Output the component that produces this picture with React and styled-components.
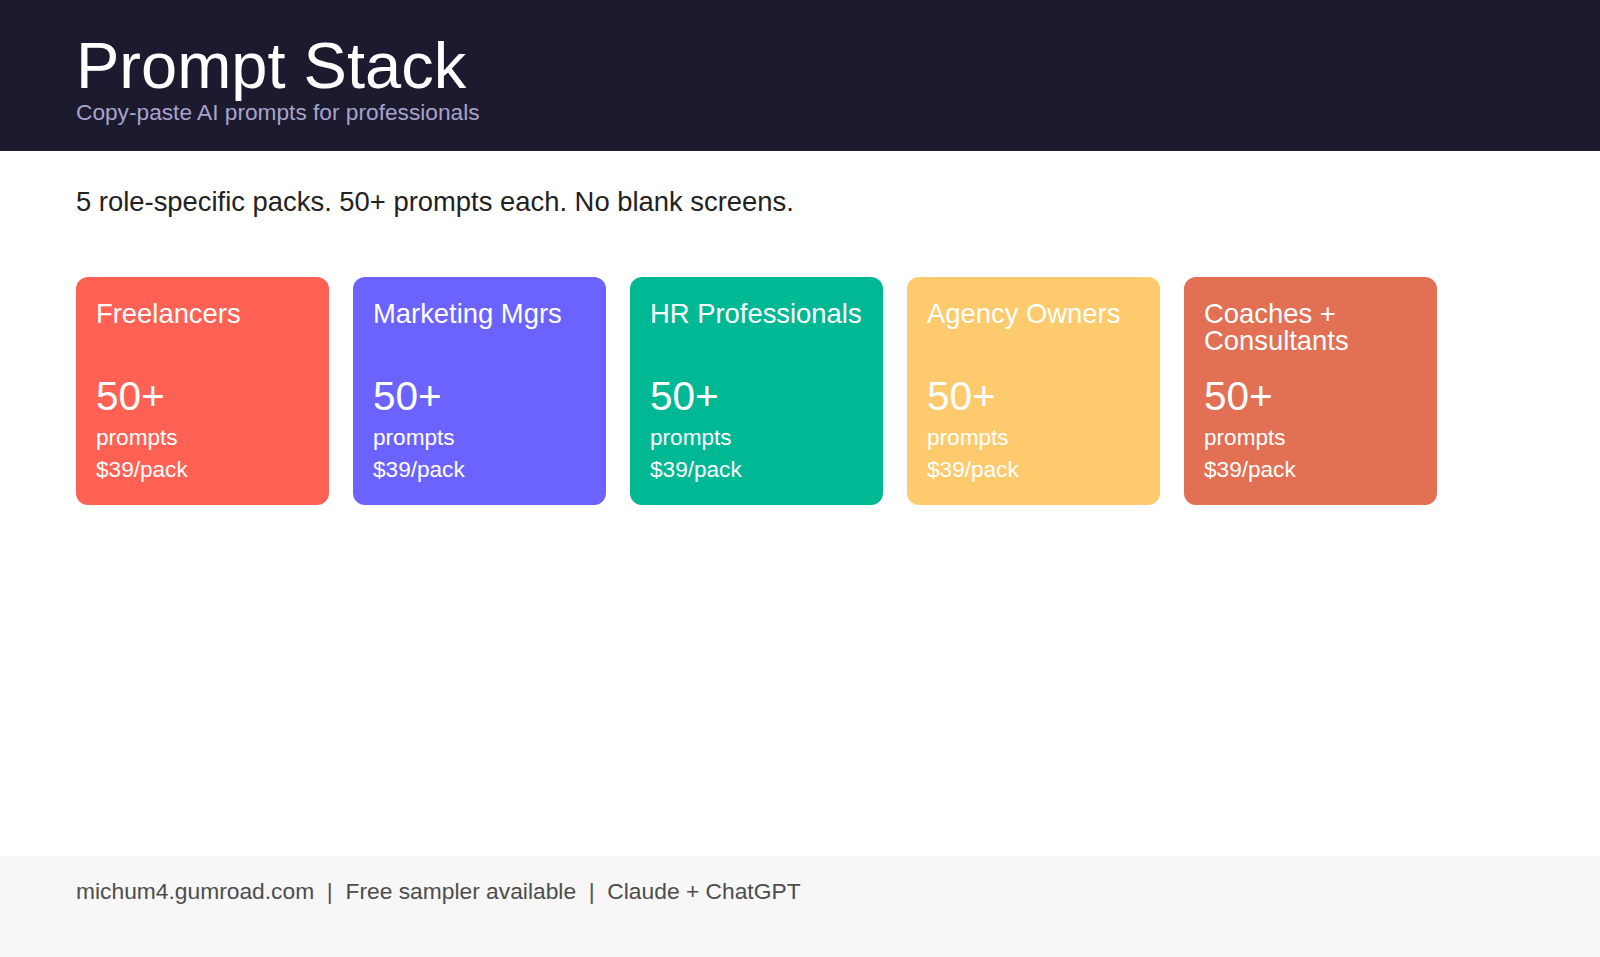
import React from "react";
import styled, { createGlobalStyle } from "styled-components";

const GlobalStyle = createGlobalStyle`
  * { box-sizing: border-box; }
  html, body { margin: 0; padding: 0; background: #ffffff; }
  body { font-family: "Liberation Sans", Arial, Helvetica, sans-serif; }
`;

const Page = styled.div`
  min-height: 100vh;
  display: flex;
  flex-direction: column;
`;

const Header = styled.header`
  height: 151px;
  background: #1b1a2e;
  padding: 34px 76px 0;
`;

const Title = styled.h1`
  margin: 0;
  font-size: 65px;
  line-height: 64px;
  font-weight: 400;
  color: #ffffff;
`;

const Subtitle = styled.p`
  margin: 2px 0 0;
  font-size: 22.7px;
  line-height: 25px;
  color: #a7a3cb;
`;

const Main = styled.main`
  flex: 1;
  padding: 35px 76px 0;
`;

const Tagline = styled.p`
  margin: 0;
  font-size: 27.4px;
  line-height: 31px;
  color: #222222;
`;

const CardRow = styled.div`
  display: flex;
  gap: 24px;
  margin-top: 60px;
`;

const Card = styled.div`
  width: 253px;
  border-radius: 12px;
  background: ${(p) => p.$bg};
  color: #ffffff;
  padding: 23px 10px 20px 20px;
  display: flex;
  flex-direction: column;
`;

const CardTitle = styled.div`
  font-size: 27.4px;
  line-height: 27px;
  min-height: 54px;
`;

const Count = styled.div`
  margin-top: 19px;
  font-size: 40.5px;
  line-height: 46px;
`;

const Detail = styled.div`
  font-size: 22.6px;
  line-height: 30px;
  margin-top: ${(p) => p.$mt || 0}px;
`;

const Footer = styled.footer`
  height: 101px;
  background: #f7f7f7;
  padding: 22px 76px 0;
  font-size: 22.8px;
  line-height: 26px;
  color: #4d4d4d;
`;

const Sep = styled.span`
  color: #555555;
`;

const packs = [
  { name: "Freelancers", color: "#ff6254" },
  { name: "Marketing Mgrs", color: "#6c63ff" },
  { name: "HR Professionals", color: "#00b894" },
  { name: "Agency Owners", color: "#fdcb6e" },
  { name: "Coaches + Consultants", color: "#e17055" },
];

export default function App() {
  return (
    <>
      <GlobalStyle />
      <Page>
        <Header>
          <Title>Prompt Stack</Title>
          <Subtitle>Copy-paste AI prompts for professionals</Subtitle>
        </Header>
        <Main>
          <Tagline>5 role-specific packs. 50+ prompts each. No blank screens.</Tagline>
          <CardRow>
            {packs.map((p) => (
              <Card key={p.name} $bg={p.color}>
                <CardTitle>{p.name}</CardTitle>
                <Count>50+</Count>
                <Detail $mt={4}>prompts</Detail>
                <Detail $mt={2}>$39/pack</Detail>
              </Card>
            ))}
          </CardRow>
        </Main>
        <Footer>
          michum4.gumroad.com<Sep>&nbsp;&nbsp;|&nbsp;&nbsp;</Sep>Free sampler available
          <Sep>&nbsp;&nbsp;|&nbsp;&nbsp;</Sep>Claude + ChatGPT
        </Footer>
      </Page>
    </>
  );
}
